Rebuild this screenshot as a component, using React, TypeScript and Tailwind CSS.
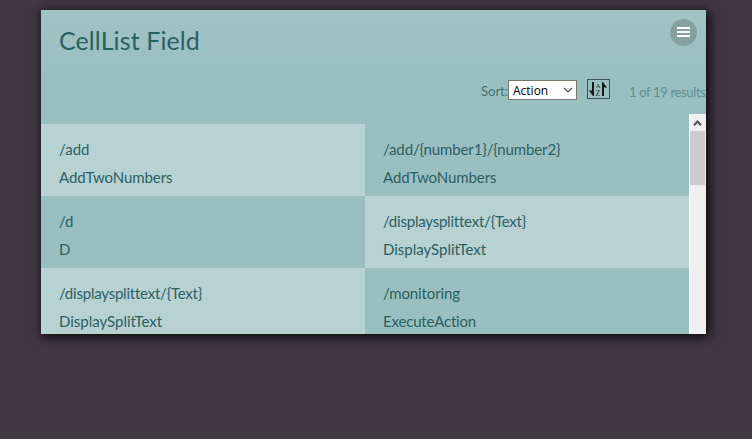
import React from "react";

const cells = [
  { path: "/add", action: "AddTwoNumbers", pathTracking: "tracking-[0px]", actionTracking: "tracking-[-0.07px]" },
  { path: "/add/{number1}/{number2}", action: "AddTwoNumbers", pathTracking: "tracking-[-0.13px]", actionTracking: "tracking-[-0.07px]" },
  { path: "/d", action: "D", pathTracking: "tracking-[0px]", actionTracking: "tracking-[0px]" },
  { path: "/displaysplittext/{Text}", action: "DisplaySplitText", pathTracking: "tracking-[-0.22px]", actionTracking: "tracking-[-0.02px]" },
  { path: "/displaysplittext/{Text}", action: "DisplaySplitText", pathTracking: "tracking-[-0.22px]", actionTracking: "tracking-[-0.02px]" },
  { path: "/monitoring", action: "ExecuteAction", pathTracking: "tracking-[-0.12px]", actionTracking: "tracking-[-0.18px]" },
];

function SortIcon() {
  return (
    <svg width="23" height="20" viewBox="0 0 23 20" className="block">
      <rect x="0.5" y="0.5" width="22" height="19" fill="none" stroke="#3d5456" />
      <path d="M5 3h2v14H6L2 11.500h3z" fill="#17181c" />
      <path d="M15 17h2V8.500h3L16 3h-1z" fill="#17181c" />
      <text x="11" y="8.500" textAnchor="middle" fontSize="7" fontFamily="Liberation Serif, serif" fill="#22383b">A</text>
      <text x="11" y="16.500" textAnchor="middle" fontSize="8" fontFamily="Liberation Serif, serif" fill="#22383b">Z</text>
    </svg>
  );
}

export default function App() {
  return (
    <div className="h-[439px] w-[752px] overflow-hidden bg-[#3f3742] pt-[10px] pl-[41px] font-['Lato',sans-serif] text-[#2b6062]">
      <section className="flex h-[324px] w-[665px] flex-col bg-[#9abfc0] bg-[linear-gradient(to_bottom,#a0c3c4_0px,#9abfc0_70px)] shadow-[2px_2px_10px_1px_rgba(0,0,0,0.85)]">
        <header className="flex h-[69px] items-start justify-between pr-[9px] pl-[18px]">
          <h1 className="pt-[14px] text-[25px] leading-[32px] tracking-[0.1px] whitespace-nowrap">CellList Field</h1>
          <button className="mt-[9px] flex size-[27px] flex-col items-center justify-center gap-[2px] rounded-full bg-[#84a0a0] pb-px" aria-label="Menu">
            <span className="h-[2px] w-[13px] bg-white" />
            <span className="h-[2px] w-[13px] bg-white" />
            <span className="h-[2px] w-[13px] bg-white" />
          </button>
        </header>
        <div className="flex h-[35px] items-start pl-[440px] whitespace-nowrap">
          <span className="w-[27px] shrink-0 pt-[3px] text-[13px] leading-[18px] text-[#3f7376]">Sort:</span>
          <button className="mt-[1px] flex h-[20px] w-[69px] shrink-0 items-center justify-between border border-[#77796b] bg-white pr-[3px] pl-[4px] font-['Open_Sans',sans-serif] text-[12px] leading-[18px] text-black">
            <span className="pt-px">Action</span>
            <svg width="10" height="6" viewBox="0 0 10 6"><path d="M1 1l4 4 4-4" fill="none" stroke="#555" strokeWidth="1.100" /></svg>
          </button>
          <div className="ml-[10px] shrink-0"><SortIcon /></div>
          <span className="ml-[19px] shrink-0 pt-[4px] text-[13px] leading-[18px] tracking-[-0.34px] text-[#5f8f92]">1 of 19 results</span>
        </div>
        <div className="flex h-[220px]">
          <div className="w-[648px] overflow-hidden pt-[10px]">
            <div className="grid grid-cols-2">
              {cells.map((cell, i) => (
                <div key={i} className={`h-[72px] pt-[11px] pl-[18px] text-[15px] leading-[28px] whitespace-nowrap ${i % 4 === 0 || i % 4 === 3 ? "bg-[#b8d1d2]" : "bg-[#9abfc0]"}`}>
                  <div className={cell.pathTracking}>{cell.path}</div>
                  <div className={cell.actionTracking}>{cell.action}</div>
                </div>
              ))}
            </div>
          </div>
          <div className="flex w-[17px] flex-col border-l border-white bg-[#f0f0f0] pr-px">
            <div className="flex h-[17px] items-center justify-center">
              <svg width="9" height="6" viewBox="0 0 9 6"><path d="M1 5.200l3.500-3.700L8 5.200" fill="none" stroke="#505050" strokeWidth="2" /></svg>
            </div>
            <div className="h-[54px] bg-[#cdcdcd]" />
          </div>
        </div>
      </section>
    </div>
  );
}
